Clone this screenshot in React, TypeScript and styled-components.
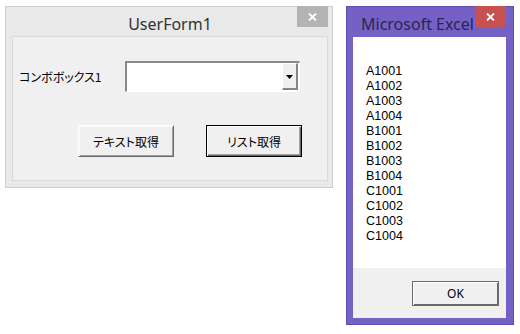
import React from 'react';
import styled, { createGlobalStyle } from 'styled-components';

const GlobalStyle = createGlobalStyle`
    body {
        margin: 0;
        background: #ffffff;
        font-family: 'Noto Sans', 'Noto Sans CJK JP', sans-serif;
    }
`;

const items = [
    'A1001', 'A1002', 'A1003', 'A1004',
    'B1001', 'B1002', 'B1003', 'B1004',
    'C1001', 'C1002', 'C1003', 'C1004',
];

const CrossIcon = () => (
    <svg width="9" height="8" viewBox="0 0 9 8">
        <path d="M1 0.5L8 7.5M8 0.5L1 7.5" stroke="#ffffff" strokeWidth="1.8" />
    </svg>
);

const App = () => {
    return (
        <Desktop>
            <GlobalStyle />
            <UserForm>
                <TitleBar>
                    <Title>UserForm1</Title>
                    <CloseButton $tone="gray">
                        <CrossIcon />
                    </CloseButton>
                </TitleBar>
                <Client>
                    <FieldRow>
                        <Label>コンボボックス1</Label>
                        <Combo>
                            <ComboText />
                            <DropButton>
                                <svg width="7" height="4" viewBox="0 0 7 4">
                                    <path d="M0 0h7L3.5 4z" fill="#000" />
                                </svg>
                            </DropButton>
                        </Combo>
                    </FieldRow>
                    <ButtonRow>
                        <Button>テキスト取得</Button>
                        <Button $default>リスト取得</Button>
                    </ButtonRow>
                </Client>
            </UserForm>

            <MsgBox>
                <MsgTitleBar>
                    <MsgTitle>Microsoft Excel</MsgTitle>
                    <CloseButton $tone="red">
                        <CrossIcon />
                    </CloseButton>
                </MsgTitleBar>
                <MsgClient>
                    <MsgBody>
                        {items.map((a, i) => (
                            <Line key={i}>{a}</Line>
                        ))}
                    </MsgBody>
                    <MsgFooter>
                        <OkButton>OK</OkButton>
                    </MsgFooter>
                </MsgClient>
            </MsgBox>
        </Desktop>
    );
};

const Desktop = styled.div`
    display: flex;
    align-items: flex-start;
    gap: 13px;
    padding: 6px 0 0 5px;
`;

const UserForm = styled.div`
    width: 328px;
    height: 182px;
    box-sizing: border-box;
    border: 1px solid #cfcfcf;
    background: #e9e9e9;
    padding: 0 4px 6px 6px;
    display: flex;
    flex-direction: column;
`;

const TitleBar = styled.div`
    height: 29px;
    display: grid;
    grid-template-columns: 1fr auto 1fr;
`;

const Title = styled.div`
    grid-column: 2;
    font-size: 16px;
    line-height: 20px;
    padding-top: 7px;
    color: #333333;
`;

const CloseButton = styled.div<{ $tone: 'gray' | 'red' }>`
    grid-column: 3;
    justify-self: end;
    align-self: start;
    width: 31px;
    height: 21px;
    margin-top: -1px;
    display: flex;
    align-items: center;
    justify-content: center;
    background: ${(p) => (p.$tone === 'red' ? '#c75050' : '#b4b4b4')};
`;

const Client = styled.div`
    flex: 1;
    background: #f0f0f0;
    border: 1px solid #dadada;
    padding: 24px 0 0 6px;
`;

const FieldRow = styled.div`
    display: flex;
    align-items: center;
`;

const Label = styled.div`
    width: 106px;
    font-family: 'Noto Sans CJK JP', sans-serif;
    font-feature-settings: 'palt';
    font-size: 12px;
    color: #000000;
    margin-top: -1px;
`;

const Combo = styled.div`
    width: 175px;
    height: 31px;
    box-sizing: border-box;
    border-style: solid;
    border-width: 2px 1px 1px 2px;
    border-color: #8a8a8a #ffffff #ffffff #8a8a8a;
    background: #ffffff;
    display: flex;
    padding: 0 1px 1px 0;
`;

const ComboText = styled.div`
    flex: 1;
`;

const DropButton = styled.div`
    width: 16px;
    box-sizing: border-box;
    background: #f0f0f0;
    border-style: solid;
    border-width: 1px 2px 2px 1px;
    border-color: #ffffff #858585 #858585 #ffffff;
    display: flex;
    align-items: center;
    justify-content: center;
    padding-top: 1px;
`;

const ButtonRow = styled.div`
    display: flex;
    gap: 32px;
    margin: 33px 0 0 59px;
`;

const Button = styled.div<{ $default?: boolean }>`
    width: 96px;
    height: 32px;
    box-sizing: border-box;
    display: flex;
    align-items: center;
    justify-content: center;
    background: #f0f0f0;
    font-family: 'Noto Sans CJK JP', sans-serif;
    font-feature-settings: 'palt';
    font-size: 12px;
    color: #000000;
    border: 1px solid ${(p) => (p.$default ? '#000000' : 'transparent')};
    box-shadow:
        inset 1px 1px 0 #ffffff,
        inset -1px -1px 0 #696969,
        inset -2px -2px 0 #a0a0a0;
    ${(p) => !p.$default && 'border-color: #ffffff #696969 #696969 #ffffff; box-shadow: inset 1px 1px 0 #f8f8f8, inset -1px -1px 0 #a0a0a0;'}
`;

const MsgBox = styled.div`
    width: 168px;
    height: 319px;
    box-sizing: border-box;
    background: #7561c6;
    border: 1px solid #5f4db0;
    padding: 0 7px 6px 6px;
    display: flex;
    flex-direction: column;
`;

const MsgTitleBar = styled.div`
    height: 30px;
    display: grid;
    grid-template-columns: auto 1fr auto;
    grid-template-areas: 'title . close';
`;

const MsgTitle = styled.div`
    font-size: 16px;
    line-height: 20px;
    padding: 7px 0 0 8px;
    color: #2a2552;
`;

const MsgClient = styled.div`
    flex: 1;
    display: flex;
    flex-direction: column;
    background: #f0f0f0;
`;

const MsgBody = styled.div`
    height: 231px;
    box-sizing: border-box;
    background: #ffffff;
    padding: 27px 0 0 13px;
`;

const Line = styled.div`
    font-family: 'Liberation Sans', sans-serif;
    font-size: 12.5px;
    line-height: 15px;
    color: #000000;
`;

const MsgFooter = styled.div`
    display: flex;
    justify-content: flex-end;
    padding: 13px 7px 0 0;
`;

const OkButton = styled.div`
    width: 87px;
    height: 25px;
    box-sizing: border-box;
    display: flex;
    align-items: center;
    justify-content: center;
    font-size: 12px;
    color: #000000;
    background: #f0f0f0;
    border: 1px solid #6a6a6a;
    box-shadow:
        inset 1px 1px 0 #ffffff,
        inset -1px -1px 0 #6a6a6a;
`;

export default App;
